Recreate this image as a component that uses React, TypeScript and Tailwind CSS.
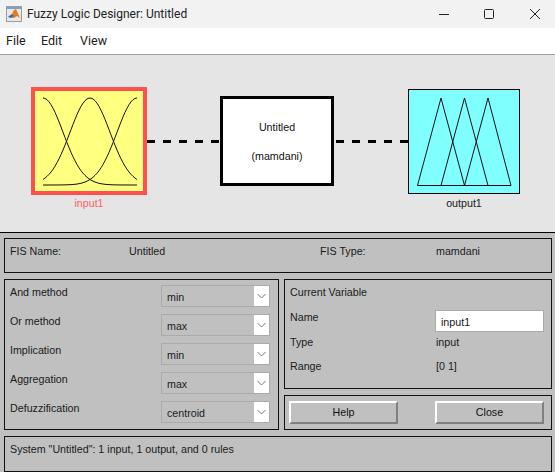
const gauss = (c: number) => {
  const pts: string[] = [];
  for (let x = 43; x <= 137; x += 2) {
    const y = 185 - 87 * Math.exp(-((x - c) * (x - c)) / (2 * 20 * 20));
    pts.push(`${x - 31},${(y - 87).toFixed(2)}`);
  }
  return pts.join(" ");
};

function Dash({ offset = 0 }: { offset?: number }) {
  return (
    <svg width="100%" height="3" className="block">
      <line x1={offset} y1="1.5" x2="100" y2="1.5" stroke="#000" strokeWidth="3" strokeDasharray="8 8" />
    </svg>
  );
}

function Select({ value }: { value: string }) {
  return (
    <div className="flex h-[22px] w-[109px] border border-[#aaaaaa] bg-[#c0c0c0]">
      <div className="flex-1 pl-[5px] pt-[4px] leading-[14px]">{value}</div>
      <div className="flex w-[15px] items-center justify-center bg-white">
        <svg width="9" height="6" viewBox="0 0 9 6">
          <path d="M0.5 1 L4.5 5 L8.5 1" fill="none" stroke="#777" strokeWidth="1" />
        </svg>
      </div>
    </div>
  );
}

function Button({ label }: { label: string }) {
  return (
    <div className="flex h-[23px] w-[109px] items-center justify-center border-2 border-t-white border-l-white border-r-[#808080] border-b-[#808080] bg-[#c0c0c0] text-[#111]">
      {label}
    </div>
  );
}

export default function App() {
  const methods = [
    ["And method", "min"],
    ["Or method", "max"],
    ["Implication", "min"],
    ["Aggregation", "max"],
    ["Defuzzification", "centroid"],
  ];
  return (
    <div className="flex h-[472px] w-[555px] flex-col overflow-hidden bg-[#c0c0c0] font-['Liberation_Sans',sans-serif] text-[10.7px] text-[#1a1a1a]">
      <div className="flex h-[28px] shrink-0 items-center bg-[#f2f2f2] pl-[6px] font-['Roboto',sans-serif] text-[12px] text-[#222]">
        <svg width="16" height="16" viewBox="0 0 16 16" className="mr-[3px]">
          <rect x="0.5" y="0.5" width="15" height="15" fill="#e8e8e8" stroke="#9a9aa8" />
          <rect x="1" y="1" width="14" height="2" fill="#7f9ec4" />
          <path d="M2 11 L6 8 L8 4 L10 3 L14 12 L11 10 L8 12 Z" fill="#e8791e" />
          <path d="M2 11 L6 8 L8 10 L5 12 Z" fill="#2d74b5" />
        </svg>
        <span className="ml-[2px] flex-1">Fuzzy Logic Designer: Untitled</span>
        <svg width="102" height="12" viewBox="0 0 102 12" className="mr-[14px]">
          <line x1="0" y1="6.5" x2="10" y2="6.5" stroke="#222" />
          <rect x="45.5" y="1.5" width="9" height="9" rx="1" fill="none" stroke="#222" />
          <path d="M91 1 L101 11 M101 1 L91 11" stroke="#222" fill="none" />
        </svg>
      </div>
      <div className="flex h-[27px] shrink-0 items-center border-b border-[#a0a0a0] bg-white pl-[6px] font-['Roboto',sans-serif] text-[12.5px] text-[#222]">
        <span className="w-[35px]">File</span>
        <span className="w-[39px]">Edit</span>
        <span>View</span>
      </div>
      <div className="grid h-[178px] shrink-0 grid-cols-[116px_73px_114px_74px_112px] grid-rows-[108px_auto] content-start border-b border-black bg-[#e5e5e5] pl-[31px] pt-[32px]">
        <div className="border-4 border-[#ff5050] bg-[#ffff80]">
          <svg width="116" height="108" className="-m-[4px] block">
            <g fill="none" stroke="#111" strokeWidth="1">
              <polyline points={gauss(43)} />
              <polyline points={gauss(90)} />
              <polyline points={gauss(137)} />
            </g>
          </svg>
        </div>
        <div className="self-center"><Dash /></div>
        <div className="mt-[9px] flex h-[90px] flex-col items-center justify-center gap-[15px] border-[3px] border-black bg-white leading-[14px] text-[#111]">
          <span>Untitled</span>
          <span>(mamdani)</span>
        </div>
        <div className="self-center"><Dash offset={2} /></div>
        <div className="mt-[2px] h-[105px] border border-black bg-[#80ffff]">
          <svg width="110" height="103" className="block">
            <g fill="none" stroke="#111" strokeWidth="1">
              <polygon points="8.5,95.5 32,8 55.5,95.5" />
              <polygon points="32,95.5 55.5,8 79,95.5" />
              <polygon points="55.5,95.5 79,8 102,95.5" />
            </g>
          </svg>
        </div>
        <div className="mt-[1px] text-center leading-[14px] text-[#ff6060]">input1</div>
        <div className="col-start-5 mt-[1px] text-center leading-[14px]">output1</div>
      </div>
      <div className="flex min-h-0 flex-1 flex-col gap-[6px] pl-[4px] pr-[3px] pt-[5px]">
        <div className="grid h-[35px] shrink-0 grid-cols-[119px_191px_116px_auto] border border-[#111] pl-[5px] pt-[5px] leading-[14px]">
          <span>FIS Name:</span>
          <span>Untitled</span>
          <span>FIS Type:</span>
          <span>mamdani</span>
        </div>
        <div className="flex shrink-0 gap-[5px]">
          <div className="flex h-[151px] w-[275px] flex-col gap-[7px] border border-[#111] pl-[5px] pt-[5px]">
            {methods.map(([label, value]) => (
              <div key={label} className="flex justify-between pr-[8px]">
                <span className="leading-[14px]">{label}</span>
                <Select value={value} />
              </div>
            ))}
          </div>
          <div className="flex flex-1 flex-col gap-[6px]">
            <div className="flex h-[110px] flex-col border border-[#111] pl-[5px] pt-[5px] leading-[14px]">
              <div>Current Variable</div>
              <div className="mt-[11px] flex h-[22px] items-start justify-between pr-[7px]">
                <span>Name</span>
                <div className="h-[22px] w-[109px] border border-[#aaaaaa] bg-white pl-[5px] pt-[4px]">input1</div>
              </div>
              <div className="mt-[3px] grid grid-cols-[146px_auto]">
                <span>Type</span>
                <span>input</span>
              </div>
              <div className="mt-[10px] grid grid-cols-[146px_auto]">
                <span>Range</span>
                <span>[0 1]</span>
              </div>
            </div>
            <div className="flex h-[35px] items-center justify-between border border-[#111] pl-[4px] pr-[7px]">
              <Button label="Help" />
              <Button label="Close" />
            </div>
          </div>
        </div>
        <div className="h-[36px] shrink-0 border border-[#111] pl-[5px] pt-[5px] leading-[14px]">
          System "Untitled": 1 input, 1 output, and 0 rules
        </div>
      </div>
    </div>
  );
}
